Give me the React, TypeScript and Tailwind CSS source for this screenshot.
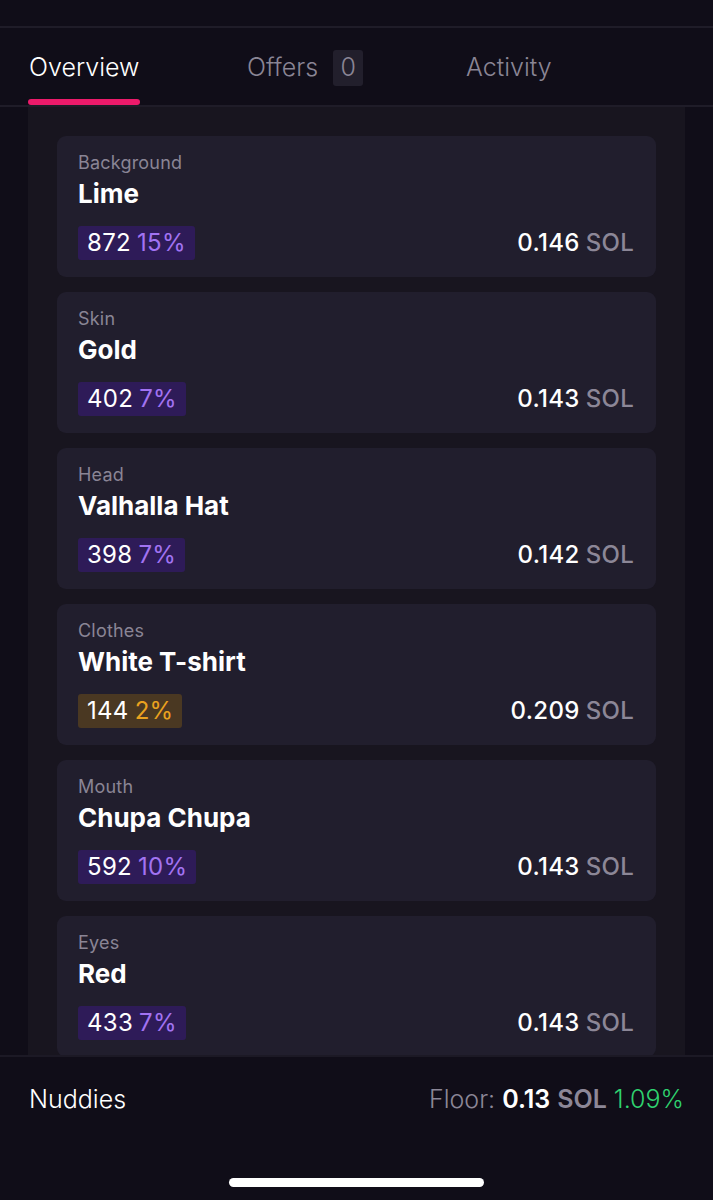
type Trait = {
  type: string;
  value: string;
  count: number;
  pct: string;
  price: string;
  rare?: boolean;
};

const traits: Trait[] = [
  { type: "Background", value: "Lime", count: 872, pct: "15%", price: "0.146" },
  { type: "Skin", value: "Gold", count: 402, pct: "7%", price: "0.143" },
  { type: "Head", value: "Valhalla Hat", count: 398, pct: "7%", price: "0.142" },
  { type: "Clothes", value: "White T-shirt", count: 144, pct: "2%", price: "0.209", rare: true },
  { type: "Mouth", value: "Chupa Chupa", count: 592, pct: "10%", price: "0.143" },
  { type: "Eyes", value: "Red", count: 433, pct: "7%", price: "0.143" },
];

function TraitCard({ t }: { t: Trait }) {
  return (
    <div className="h-[141px] shrink-0 rounded-[9px] bg-[#211e2d] pl-[21px] pr-[22px] pt-[16px]">
      <p className="text-[18px] leading-[22px] tracking-[0.2px] text-[#8a8595]">{t.type}</p>
      <p className="mt-[5px] text-[26px] font-bold leading-[30px] text-white">{t.value}</p>
      <div className="mt-[17px] flex items-center justify-between">
        <span
          className={
            "flex h-[34px] items-center gap-[6px] rounded-[3px] px-[9px] text-[24px] leading-none tracking-[0.3px] " +
            (t.rare ? "bg-[#4a3822]" : "bg-[#2e1b58]")
          }
        >
          <span className="text-white">{t.count}</span>
          <span className={t.rare ? "text-[#eaa21f]" : "text-[#a273f2]"}>{t.pct}</span>
        </span>
        <span className="flex items-center gap-[6px] text-[24px] font-medium leading-none tracking-[0.3px]">
          <span className="text-white">{t.price}</span>
          <span className="text-[#8c8797]">SOL</span>
        </span>
      </div>
    </div>
  );
}

export default function App() {
  return (
    <div
      className="flex h-[1200px] w-[713px] flex-col overflow-hidden bg-[#100d18]"
      style={{ fontFamily: "Inter, 'Noto Sans', sans-serif" }}
    >
      <div className="h-[28px] shrink-0 border-b-2 border-[#1f1c28]" />

      {/* tabs */}
      <div className="grid h-[79px] shrink-0 grid-cols-[219px_219px_1fr] border-b-2 border-[#1f1c28] pl-[28px] text-[25px] font-light">
        <div className="flex flex-col">
          <div className="flex h-[71px] items-center pl-[1px] pt-[8px] text-white">Overview</div>
          <div className="h-[6px] w-[112px] rounded-full bg-[#ec1a6a]" />
        </div>
        <div className="flex h-[71px] items-center gap-[15px] pt-[8px] text-[#8a8595]">
          <span>Offers</span>
          <span className="flex h-[36px] w-[30px] items-center justify-center rounded-[3px] bg-[#221f2c]">0</span>
        </div>
        <div className="flex h-[71px] items-center pt-[8px] text-[#8a8595]">Activity</div>
      </div>

      {/* content */}
      <div className="min-h-0 flex-1 overflow-hidden">
        <div className="mx-[28px] flex flex-col gap-[15px] bg-[#18151f] px-[29px] pt-[29px] pb-[20px]">
          {traits.map((t) => (
            <TraitCard key={t.type} t={t} />
          ))}
        </div>
      </div>

      {/* footer */}
      <div className="relative h-[145px] shrink-0 border-t-2 border-[#1c1925] bg-[#100d18]">
        <div className="flex h-[86px] items-center justify-between px-[29px] text-[25px]">
          <span className="font-light text-white">Nuddies</span>
          <span className="flex items-center gap-[7px]">
            <span className="font-light text-[#8c8797]">Floor:</span>
            <span className="font-semibold text-white">0.13</span>
            <span className="font-semibold text-[#8c8797]">SOL</span>
            <span className="font-light text-[#2fd26f]">1.09%</span>
          </span>
        </div>
        <div className="mx-auto mt-[35px] h-[9px] w-[255px] rounded-full bg-white" />
      </div>
    </div>
  );
}
